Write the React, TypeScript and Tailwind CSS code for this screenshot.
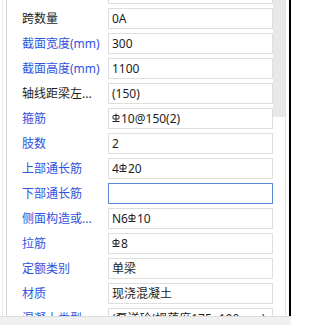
import React from "react";

type Row = { label: string; value: React.ReactNode; blue?: boolean; focus?: boolean };

/** 钢筋符号（三级钢） */
function Rebar() {
  return (
    <svg width="8" height="9" viewBox="0 0 8 9" className="mr-[1px] -mt-[3px] inline-block shrink-0">
      <path d="M4 0.5V8.5M0.5 8.5H7.5" stroke="#222" strokeWidth="1" fill="none" />
      <rect x="1" y="2.5" width="6" height="3.5" rx="0.8" stroke="#222" strokeWidth="1" fill="none" />
    </svg>
  );
}

const rows: Row[] = [
  { label: "", value: "" },
  { label: "跨数量", value: "0A" },
  { label: "截面宽度(mm)", value: "300", blue: true },
  { label: "截面高度(mm)", value: "1100", blue: true },
  { label: "轴线距梁左...", value: "(150)" },
  { label: "箍筋", value: <><Rebar />10@150(2)</>, blue: true },
  { label: "肢数", value: "2", blue: true },
  { label: "上部通长筋", value: <>4<Rebar />20</>, blue: true },
  { label: "下部通长筋", value: "", blue: true, focus: true },
  { label: "侧面构造或...", value: <>N6<Rebar />10</>, blue: true },
  { label: "拉筋", value: <><Rebar />8</>, blue: true },
  { label: "定额类别", value: "单梁", blue: true },
  { label: "材质", value: "现浇混凝土", blue: true },
  { label: "混凝土类型", value: "(泵送砼(坍落度175~190mm)", blue: true },
];

export default function App() {
  return (
    <div
      className="relative h-[325px] w-[291px] overflow-hidden bg-white text-[12px] text-[#1e1e1e]"
      style={{ fontFamily: '"Noto Sans", "Noto Sans CJK SC", sans-serif' }}
    >
      <div className="flex h-[316px]">
        {/* 左侧边框 */}
        <div className="ml-[2px] w-[1px] bg-[#ececec]" />
        <div className="ml-[3px] w-[1px] bg-[#d4d4d4]" />

        {/* 属性列表 */}
        <div className="-mt-[17px] flex w-[266px] flex-col gap-[4px] overflow-hidden">
          {rows.map((r, i) => (
            <div key={i} className="flex h-[21px] shrink-0 items-center">
              <div
                className={`w-[101px] shrink-0 whitespace-nowrap pl-[15px] leading-none ${
                  r.blue ? "text-[#2f52e0]" : "text-[#1e1e1e]"
                }`}
              >
                {r.label}
              </div>
              <div
                className={`flex h-[21px] w-[165px] shrink-0 items-center whitespace-nowrap border bg-white pl-[3px] leading-none ${
                  r.focus ? "border-[#5b89d8]" : "border-[#dedede]"
                }`}
              >
                {r.value}
              </div>
            </div>
          ))}
        </div>

        {/* 滚动条 */}
        <div className="flex w-[13px] flex-col border-r border-[#e2e2e2]">
          <div className="h-[117px] bg-[#e8e8e8]" />
        </div>
        <div className="w-[3px]" />
        <div className="w-[2px] bg-black" />
      </div>

      {/* 底部 */}
      <div className="h-[9px] border-t border-[#dcdcdc] bg-[#f0f0f0]" />
    </div>
  );
}
